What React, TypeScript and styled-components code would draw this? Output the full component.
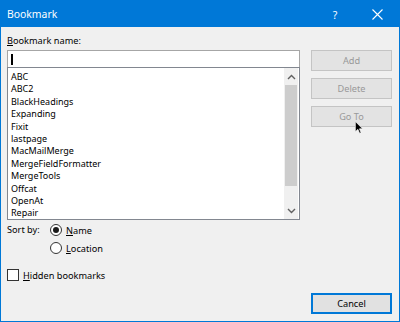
import React from "react";
import styled, { createGlobalStyle } from "styled-components";

const GlobalStyle = createGlobalStyle`
  html, body {
    margin: 0;
    padding: 0;
    background: #f0f0f0;
  }
  * { box-sizing: border-box; }
`;

const bookmarks = [
  "ABC",
  "ABC2",
  "BlackHeadings",
  "Expanding",
  "Fixit",
  "lastpage",
  "MacMailMerge",
  "MergeFieldFormatter",
  "MergeTools",
  "Offcat",
  "OpenAt",
  "Repair",
];

export default function App() {
  return (
    <>
      <GlobalStyle />
      <Window>
        <TitleBar>
          <Title>Bookmark</Title>
          <HelpButton>?</HelpButton>
          <CloseButton>
            <svg width="11" height="11" viewBox="0 0 11 11">
              <path d="M0.5 0.5 L10.5 10.5 M10.5 0.5 L0.5 10.5" stroke="#fff" strokeWidth="1.1" />
            </svg>
          </CloseButton>
        </TitleBar>
        <Body>
          <LeftCol>
            <Label><u>B</u>ookmark name:</Label>
            <NameInput>
              <Caret />
            </NameInput>
            <ListBox>
              <Items>
                {bookmarks.map((b) => (
                  <Item key={b}>{b}</Item>
                ))}
              </Items>
              <ScrollBar>
                <Arrow>
                  <svg width="9" height="6" viewBox="0 0 9 6">
                    <path d="M1 5 L4.5 1.5 L8 5" fill="none" stroke="#606060" strokeWidth="1.4" />
                  </svg>
                </Arrow>
                <Track>
                  <Thumb />
                </Track>
                <Arrow>
                  <svg width="9" height="6" viewBox="0 0 9 6">
                    <path d="M1 1 L4.5 4.5 L8 1" fill="none" stroke="#606060" strokeWidth="1.4" />
                  </svg>
                </Arrow>
              </ScrollBar>
            </ListBox>
            <SortRow>
              <SortLabel>Sort by:</SortLabel>
              <RadioGroup>
                <Option>
                  <Radio $checked />
                  <span><u>N</u>ame</span>
                </Option>
                <Option>
                  <Radio />
                  <span><u>L</u>ocation</span>
                </Option>
              </RadioGroup>
            </SortRow>
            <CheckRow>
              <CheckBox />
              <span><u>H</u>idden bookmarks</span>
            </CheckRow>
          </LeftCol>
          <RightCol>
            <Btn disabled>Add</Btn>
            <Btn disabled>Delete</Btn>
            <GoToWrap>
              <Btn disabled>Go To</Btn>
              <Cursor width="8" height="13" viewBox="0 0 12 19">
                <path
                  d="M0.5 0.5 L0.5 16 L4.3 12.3 L6.9 18.3 L9.2 17.3 L6.7 11.5 L11.5 11.5 Z"
                  fill="#000"
                  stroke="#fff"
                  strokeWidth="1"
                />
              </Cursor>
            </GoToWrap>
            <Spacer />
            <Btn $default>Cancel</Btn>
          </RightCol>
        </Body>
      </Window>
    </>
  );
}

const Window = styled.div`
  width: 400px;
  height: 322px;
  border: 1px solid #0078d7;
  border-top: none;
  background: #f0f0f0;
  display: flex;
  flex-direction: column;
  font-family: "Noto Sans", "Open Sans", sans-serif;
  font-size: 9.2px;
  color: #000;
`;

const TitleBar = styled.div`
  height: 27px;
  background: #0078d7;
  display: flex;
  align-items: center;
  color: #fff;
  margin: 0 -1px;
`;

const Title = styled.div`
  flex: 1;
  padding-left: 7px;
  font-size: 10.4px;
  padding-top: 1px;
`;

const HelpButton = styled.div`
  width: 40px;
  text-align: center;
  font-size: 10.5px;
  padding-top: 2px;
`;

const CloseButton = styled.div`
  width: 45px;
  display: flex;
  justify-content: center;
  align-items: center;
  padding-top: 1px;
`;

const Body = styled.div`
  flex: 1;
  display: flex;
  padding: 6px 7px 7px 6px;
  gap: 11px;
`;

const LeftCol = styled.div`
  width: 293px;
  display: flex;
  flex-direction: column;
`;

const Label = styled.div`
  line-height: 16px;
  height: 16px;
`;

const NameInput = styled.div`
  margin-top: 1px;
  height: 17px;
  background: #fff;
  border: 1px solid #a6a6a6;
  border-bottom: none;
  display: flex;
  align-items: center;
  padding-left: 3px;
`;

const Caret = styled.div`
  width: 2px;
  height: 11px;
  background: #000;
`;

const ListBox = styled.div`
  height: 153px;
  background: #fff;
  border: 1px solid #828790;
  display: flex;
`;

const Items = styled.div`
  flex: 1;
  padding: 3px 0 0 3px;
  overflow: hidden;
`;

const Item = styled.div`
  font-size: 9px;
  line-height: 12.4px;
  height: 12.4px;
  white-space: nowrap;
`;

const ScrollBar = styled.div`
  width: 14px;
  margin: 0 1px 0 0;
  background: #f0f0f0;
  display: flex;
  flex-direction: column;
`;

const Arrow = styled.div`
  height: 17px;
  display: flex;
  align-items: center;
  justify-content: center;
`;

const Track = styled.div`
  flex: 1;
  display: flex;
  flex-direction: column;
  padding: 0 1px;
`;

const Thumb = styled.div`
  height: 101px;
  background: #cdcdcd;
`;

const SortRow = styled.div`
  display: flex;
  margin-top: 1px;
`;

const SortLabel = styled.div`
  width: 43px;
  line-height: 18px;
`;

const RadioGroup = styled.div`
  display: flex;
  flex-direction: column;
`;

const Option = styled.div`
  height: 18px;
  display: flex;
  align-items: center;
  gap: 4px;
`;

const Radio = styled.div<{ $checked?: boolean }>`
  width: 12px;
  height: 12px;
  border-radius: 50%;
  border: 1px solid #333;
  background: #fff;
  display: flex;
  align-items: center;
  justify-content: center;
  &::after {
    content: "";
    display: ${(p) => (p.$checked ? "block" : "none")};
    width: 6px;
    height: 6px;
    border-radius: 50%;
    background: #1a1a1a;
  }
`;

const CheckRow = styled.div`
  display: flex;
  align-items: center;
  gap: 4px;
  margin-top: 11px;
  height: 14px;
`;

const CheckBox = styled.div`
  width: 12px;
  height: 12px;
  border: 1px solid #333;
  background: #fff;
`;

const RightCol = styled.div`
  width: 81px;
  display: flex;
  flex-direction: column;
  gap: 7px;
  padding-top: 17px;
`;

const GoToWrap = styled.div`
  position: relative;
  display: flex;
  flex-direction: column;
`;

const Cursor = styled.svg`
  position: absolute;
  left: 44px;
  top: 15px;
`;

const Spacer = styled.div`
  flex: 1;
`;

const Btn = styled.button<{ $default?: boolean }>`
  height: 21px;
  width: 81px;
  padding: 0;
  font-family: "Noto Sans", "Open Sans", sans-serif;
  font-size: 9.2px;
  background: #e1e1e1;
  border: ${(p) => (p.$default ? "2px solid #0078d7" : "1px solid #c4c4c4")};
  color: #000;
  &:disabled {
    color: #999;
    background: #e3e3e3;
  }
`;
